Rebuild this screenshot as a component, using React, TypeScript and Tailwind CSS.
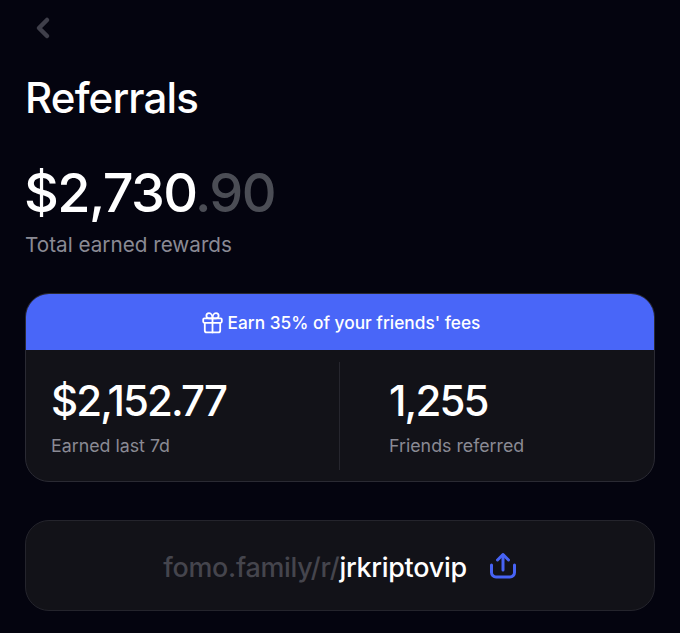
import { ChevronLeft } from "lucide-react";

const GiftIcon = () => (
  <svg width="21" height="22" viewBox="0 0 21 22" fill="none" stroke="#ffffff" strokeWidth="1.8" strokeLinecap="round" strokeLinejoin="round">
    <rect x="1.2" y="6.4" width="18.6" height="4.4" rx="1.2" />
    <path d="M2.8 10.8v7.6a2 2 0 0 0 2 2h11.4a2 2 0 0 0 2-2v-7.6" />
    <path d="M10.5 6.4v14" />
    <path d="M10.5 6.4H7a2.6 2.6 0 1 1 0-5.2c2.4 0 3.5 3 3.5 5.2Z" />
    <path d="M10.5 6.4H14a2.6 2.6 0 1 0 0-5.2c-2.4 0-3.5 3-3.5 5.2Z" />
  </svg>
);

const ShareIcon = () => (
  <svg width="28" height="28" viewBox="0 0 28 28" fill="none" stroke="#4763f4" strokeWidth="3" strokeLinecap="round" strokeLinejoin="round">
    <path d="M2.5 13v7.5a4.5 4.5 0 0 0 4.5 4.5h14a4.5 4.5 0 0 0 4.5-4.5V13" />
    <path d="M14 18V3" />
    <path d="M8.5 8 14 2.5 19.5 8" />
  </svg>
);

const Stat = ({ value, label, className }: { value: string; label: string; className: string }) => (
  <div className={className}>
    <div className="text-[42px] leading-[50px] font-medium tracking-[-0.045em] text-white">{value}</div>
    <div className="mt-[8px] text-[17.8px] leading-6 text-[#8a8a94]">{label}</div>
  </div>
);

const App = () => {
  return (
    <div className="h-[633px] w-[680px] overflow-hidden bg-[#04040f] px-[25px] font-['Inter',sans-serif]">
      <div className="pt-[12px] pl-[2px] h-[72px]">
        <ChevronLeft size={32} strokeWidth={3.4} className="text-[#3f3f4a]" />
      </div>
      <h1 className="text-[42px] leading-[52px] font-medium tracking-[-0.02em] text-white">Referrals</h1>
      <div className="mt-[37px] -ml-[1px] text-[54px] leading-[64px] font-medium tracking-[-0.03em] text-white">
        $2,730<span className="text-[#4b4d55]">.90</span>
      </div>
      <p className="mt-[8px] text-[20.7px] leading-6 text-[#8a8a94]">Total earned rewards</p>

      <div className="mt-[36px] h-[189px] overflow-hidden rounded-[24px] border border-[#2a2a33] bg-[#121218]">
        <div className="flex h-[56px] items-center justify-center gap-[5px] bg-[#4966f8] pl-[2px] pt-[1px] text-[17.3px] font-medium text-white">
          <GiftIcon />
          <span>Earn 35% of your friends' fees</span>
        </div>
        <div className="flex h-[132px] items-stretch py-[12px]">
          <Stat value="$2,152.77" label="Earned last 7d" className="w-[314px] border-r border-[#26262e] pl-[25px] pt-[14px]" />
          <Stat value="1,255" label="Friends referred" className="flex-1 pl-[49px] pt-[14px]" />
        </div>
      </div>

      <div className="mt-[38px] flex h-[91px] items-center justify-center gap-[22px] rounded-[24px] border border-[#24242c] bg-[#121218]">
        <span className="pt-[3px] text-[26.9px] font-medium tracking-[-0.01em] text-white">
          <span className="text-[#45454d]">fomo.family/r/</span>jrkriptovip
        </span>
        <ShareIcon />
      </div>
    </div>
  );
};

export default App;
